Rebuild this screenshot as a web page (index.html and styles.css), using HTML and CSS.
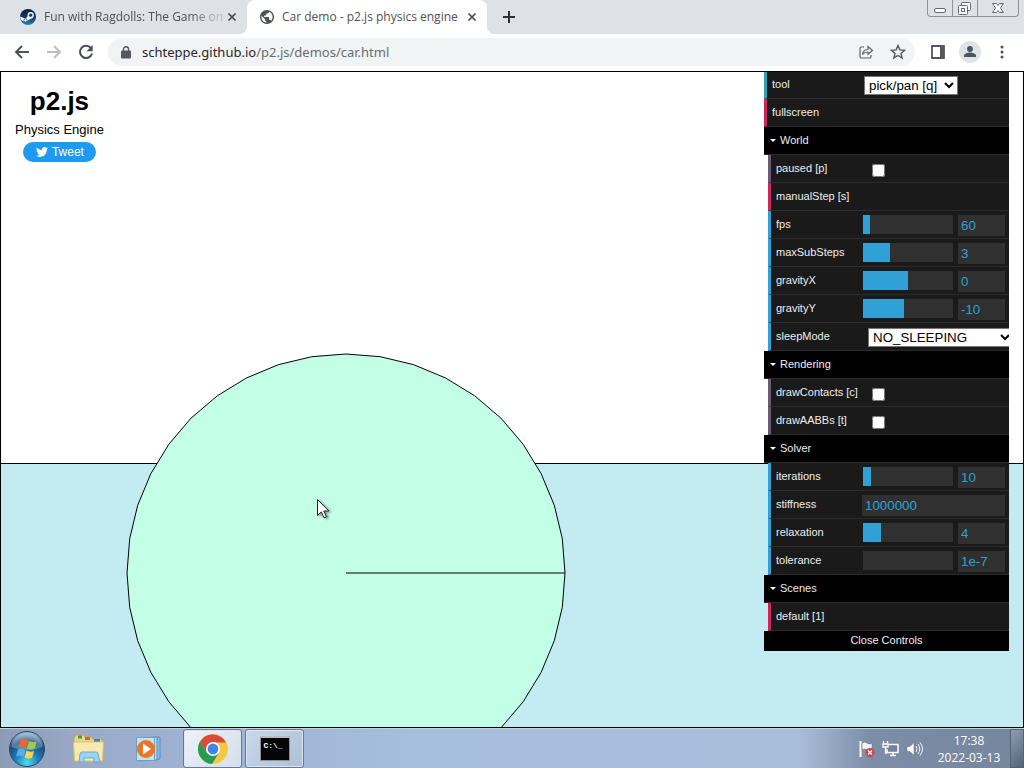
FILE: index.html
```html
<!DOCTYPE html>
<html lang="en">
<head>
<meta charset="utf-8">
<title>Car demo - p2.js physics engine</title>
<link rel="stylesheet" href="styles.css">
</head>
<body>
<header class="tabstrip">
  <div class="tab">
    <svg class="favicon" viewBox="0 0 16 16"><defs><linearGradient id="steam" x2="0" y2="1"><stop offset="0" stop-color="#111d36"/><stop offset=".5" stop-color="#123966"/><stop offset="1" stop-color="#2485bf"/></linearGradient></defs><circle cx="8" cy="8" r="8" fill="url(#steam)"/><path d="M0 7.500 5.600 9.800 8 7 13 8.500 8.200 11.200 5.500 13.200 1 11z" fill="#fff"/><circle cx="10.700" cy="6.200" r="3.100" fill="#fff"/><circle cx="10.700" cy="6.200" r="1.900" fill="#17325a" stroke="#fff" stroke-width=".5"/><circle cx="5.500" cy="11.300" r="1.600" fill="#fff" stroke="#17325a" stroke-width=".7"/></svg>
    <span class="tab-title tab-title-faded">Fun with Ragdolls: The Game on</span>
    <button class="tab-close" aria-label="Close tab"><svg width="10" height="10" viewBox="0 0 10 10"><path d="M1.500 1.500l7 7m0-7l-7 7" stroke="#45484c" stroke-width="1.700"/></svg></button>
  </div>
  <div class="tab tab-active">
    <svg class="favicon favicon-globe" viewBox="2 2 20 20"><path fill="#4f5357" d="M12 2C6.480 2 2 6.480 2 12s4.480 10 10 10 10-4.480 10-10S17.520 2 12 2zm-1 17.930c-3.950-.49-7-3.850-7-7.930 0-.62.080-1.210.21-1.790L9 15v1c0 1.100.9 2 2 2v1.930zm6.900-2.540c-.26-.81-1-1.390-1.900-1.390h-1v-3c0-.55-.45-1-1-1H8v-2h2c.55 0 1-.45 1-1V7h2c1.100 0 2-.9 2-2v-.41c2.930 1.190 5 4.060 5 7.410 0 2.080-.8 3.970-2.100 5.390z"/></svg>
    <span class="tab-title">Car demo - p2.js physics engine</span>
    <button class="tab-close" aria-label="Close tab"><svg width="10" height="10" viewBox="0 0 10 10"><path d="M1.500 1.500l7 7m0-7l-7 7" stroke="#45484c" stroke-width="1.700"/></svg></button>
  </div>
  <button class="new-tab" aria-label="New tab"><svg width="12" height="12" viewBox="0 0 12 12"><path d="M6 0v12M0 6h12" stroke="#2d3033" stroke-width="2"/></svg></button>
  <div class="window-controls">
    <button aria-label="Minimize"><svg width="24" height="16" viewBox="0 0 24 16"><rect x="6.500" y="8.500" width="11" height="4" rx="1.500" fill="#fafbfc" stroke="#666b74"/></svg></button>
    <button aria-label="Restore"><svg width="24" height="16" viewBox="0 0 24 16"><g fill="#fafbfc" stroke="#666b74"><rect x="8.500" y="2.500" width="9" height="8" rx="1"/><rect x="5.500" y="5.500" width="9" height="9" rx="1"/><rect x="8.500" y="8.500" width="3" height="3"/></g></svg></button>
    <button aria-label="Close window"><svg width="40" height="16" viewBox="0 0 40 16"><path d="M14.500 3.500h4l1.500 2 1.500-2h4L22.500 8l3 4.500h-4l-1.500-2-1.500 2h-4l3-4.500z" fill="#fafbfc" stroke="#666b74"/></svg></button>
  </div>
</header>
<nav class="toolbar">
  <button aria-label="Back"><svg width="16" height="16" viewBox="0 0 16 16"><path d="M15 8H2m6-6L2 8l6 6" fill="none" stroke="#4c5054" stroke-width="1.900"/></svg></button>
  <button aria-label="Forward"><svg width="16" height="16" viewBox="0 0 16 16"><path d="M1 8h13M8 2l6 6-6 6" fill="none" stroke="#bdbfc2" stroke-width="1.900"/></svg></button>
  <button aria-label="Reload"><svg width="16" height="16" viewBox="0 0 16 16"><path d="M13 4.200A6.100 6.100 0 1 0 14 9.500" fill="none" stroke="#4c5054" stroke-width="2"/><path d="M14.700 1v6.200H8.500z" fill="#4c5054"/></svg></button>
  <div class="omnibox">
    <svg width="10" height="13" viewBox="0 0 10 13"><rect y="4.500" width="10" height="8" rx="1" fill="#54585d"/><path d="M2.500 5V3.200a2.500 2.500 0 0 1 5 0V5" fill="none" stroke="#54585d" stroke-width="1.400"/></svg>
    <div class="url">schteppe.github.io<span>/p2.js/demos/car.html</span></div>
    <button aria-label="Share"><svg width="16" height="16" viewBox="0 0 16 16"><path d="M6 3H3.500A1.500 1.500 0 0 0 2 4.500v8A1.500 1.500 0 0 0 3.500 14h8a1.500 1.500 0 0 0 1.500-1.500V11M4.500 10.500C5 7 7 5.500 10 5.500V2.500L14.500 6.500 10 10.300V8C7.500 8 6 8.500 4.500 10.500z" fill="none" stroke="#5f6368" stroke-width="1.200"/></svg></button>
    <button aria-label="Bookmark"><svg width="16" height="16" viewBox="0 0 16 16"><path d="M8 1.600l1.900 4.300 4.700.4-3.600 3.100 1.100 4.600L8 11.500 3.900 14 5 9.400 1.400 6.300l4.700-.4z" fill="none" stroke="#54585d" stroke-width="1.400"/></svg></button>
  </div>
  <div class="toolbar-end">
    <button aria-label="Side panel"><svg width="14" height="14" viewBox="0 0 14 14"><path d="M1 1h12v12H1z" fill="#fff" stroke="#54585d" stroke-width="1.800"/><path d="M9 1h4v12H9z" fill="#54585d"/></svg></button>
    <button aria-label="Profile"><svg width="22" height="22" viewBox="0 0 22 22"><circle cx="11" cy="11" r="11" fill="#dfe2e7"/><circle cx="11" cy="8" r="2.900" fill="#4b545f"/><path d="M5 16v-1.500c0-2 4-3 6-3s6 1 6 3V16z" fill="#4b545f"/></svg></button>
    <button class="menu" aria-label="Menu"><svg width="4" height="14" viewBox="0 0 4 14" fill="#4c5054"><circle cx="2" cy="2" r="1.500"/><circle cx="2" cy="7" r="1.500"/><circle cx="2" cy="12" r="1.500"/></svg></button>
  </div>
</nav>

<main class="stage">
  <svg class="world" width="100%" height="100%">
    <rect class="ground" x="-2" y="391.500" width="101%" height="100%"/>
    <g class="wheel" transform="translate(345 501)">
      <polygon points="219,0 216.300,34.300 208.300,67.700 195.100,99.400 177.200,128.700 154.900,154.900 128.700,177.200 99.400,195.100 67.700,208.300 34.300,216.300 0,219 -34.300,216.300 -67.700,208.300 -99.400,195.100 -128.700,177.200 -154.900,154.900 -177.200,128.700 -195.100,99.400 -208.300,67.700 -216.300,34.300 -219,0 -216.300,-34.300 -208.300,-67.700 -195.100,-99.400 -177.200,-128.700 -154.900,-154.900 -128.700,-177.200 -99.400,-195.100 -67.700,-208.300 -34.300,-216.300 0,-219 34.300,-216.300 67.700,-208.300 99.400,-195.100 128.700,-177.200 154.900,-154.900 177.200,-128.700 195.100,-99.400 208.300,-67.700 216.300,-34.300"/>
      <line x1="0" y1="0" x2="219" y2="0"/>
    </g>
  </svg>
  <section class="brand">
    <h1>p2.js</h1>
    <p>Physics Engine</p>
    <a class="tweet" href="#tweet"><svg width="12" height="12" viewBox="0 0 24 24"><path fill="#fff" d="M23.950 4.570a10 10 0 0 1-2.820.77 4.960 4.960 0 0 0 2.160-2.720c-.95.55-2 .95-3.130 1.180a4.920 4.920 0 0 0-8.380 4.480C7.690 8.100 4.070 6.130 1.640 3.160a4.820 4.820 0 0 0-.67 2.480c0 1.710.87 3.210 2.190 4.100a4.900 4.900 0 0 1-2.230-.62v.06a4.920 4.920 0 0 0 3.950 4.830 5 5 0 0 1-2.210.08 4.940 4.940 0 0 0 4.600 3.420A9.870 9.870 0 0 1 0 19.540a13.990 13.990 0 0 0 7.550 2.210c9.050 0 14-7.500 14-13.980 0-.21 0-.42-.02-.63a9.940 9.940 0 0 0 2.420-2.570z"/></svg>Tweet</a>
  </section>

  <aside class="gui">
    <div class="row select"><label for="tool">tool</label><div class="control"><select id="tool" class="tool"><option>pick/pan [q]</option></select></div></div>
    <button class="row function">fullscreen</button>
    <button class="folder">World</button>
    <div class="group">
      <div class="row boolean"><label for="paused">paused [p]</label><div class="control"><input type="checkbox" id="paused"></div></div>
      <button class="row function">manualStep [s]</button>
      <div class="row number"><label for="fps">fps</label><div class="control"><div class="slider"><i style="width:8%"></i></div><input type="text" id="fps" value="60"></div></div>
      <div class="row number"><label for="sub">maxSubSteps</label><div class="control"><div class="slider"><i style="width:30%"></i></div><input type="text" id="sub" value="3"></div></div>
      <div class="row number"><label for="gx">gravityX</label><div class="control"><div class="slider"><i style="width:50%"></i></div><input type="text" id="gx" value="0"></div></div>
      <div class="row number"><label for="gy">gravityY</label><div class="control"><div class="slider"><i style="width:45%"></i></div><input type="text" id="gy" value="-10"></div></div>
      <div class="row number"><label for="sleep">sleepMode</label><div class="control"><select id="sleep" class="sleep"><option>NO_SLEEPING</option><option>BODY_SLEEPING</option><option>ISLAND_SLEEPING</option></select></div></div>
    </div>
    <button class="folder">Rendering</button>
    <div class="group">
      <div class="row boolean"><label for="contacts">drawContacts [c]</label><div class="control"><input type="checkbox" id="contacts"></div></div>
      <div class="row boolean"><label for="aabbs">drawAABBs [t]</label><div class="control"><input type="checkbox" id="aabbs"></div></div>
    </div>
    <button class="folder">Solver</button>
    <div class="group">
      <div class="row number"><label for="iter">iterations</label><div class="control"><div class="slider"><i style="width:9%"></i></div><input type="text" id="iter" value="10"></div></div>
      <div class="row number"><label for="stiff">stiffness</label><div class="control"><input type="text" id="stiff" class="full" value="1000000"></div></div>
      <div class="row number"><label for="relax">relaxation</label><div class="control"><div class="slider"><i style="width:20%"></i></div><input type="text" id="relax" value="4"></div></div>
      <div class="row number"><label for="tol">tolerance</label><div class="control"><div class="slider"><i style="width:0%"></i></div><input type="text" id="tol" value="1e-7"></div></div>
    </div>
    <button class="folder">Scenes</button>
    <div class="group">
      <button class="row function">default [1]</button>
    </div>
    <button class="close-controls">Close Controls</button>
  </aside>

  <svg class="cursor" width="16" height="22" viewBox="0 0 16 22"><path d="M.5.500v16l3.800-3.600 2.700 6 2.500-1.100-2.700-5.800h5z" fill="#fff" stroke="#222"/></svg>
</main>

<footer class="taskbar">
  <button class="start" aria-label="Start"><svg width="38" height="38" viewBox="0 0 38 38"><defs><radialGradient id="orb" cx=".5" cy=".9" r=".85"><stop offset="0" stop-color="#4fe0f4"/><stop offset=".4" stop-color="#1b7fb9"/><stop offset=".75" stop-color="#194b7c"/><stop offset="1" stop-color="#8fb0cc"/></radialGradient></defs><circle cx="19" cy="19" r="17.500" fill="url(#orb)" stroke="#284868"/><path d="M3.500 17A15.600 15.600 0 0 1 34.500 17Q19 23 3.500 17z" fill="#fff" opacity=".25"/><path d="M12.500 10q4-2 7.500.5l-2 7.500q-3.500-2-7.500-.5z" fill="#f0652c"/><path d="M21 11q3.500 2 7.500.5l-2 7.500q-4 1.500-7.500-.5z" fill="#9ccc4b"/><path d="M10 19.500q4-2 7.500.5l-2 7q-3.500-2-7.500-.5z" fill="#59aee6"/><path d="M18.500 20.500q3.500 2 7.500.5l-2 7q-4 1.500-7.500-.5z" fill="#fed154"/></svg></button>
  <button class="pin" aria-label="File Explorer"><svg width="34" height="30" viewBox="0 0 34 30"><path d="M2 4l2-3h7l2 2h7v2h9l2 3v19H2z" fill="#ecd786" stroke="#c6aa58"/><path d="M6 1.500h4v3H6z" fill="#3e9b54"/><path d="M13 3h5v3h-5z" fill="#d3603c"/><path d="M22 5h6v3h-6z" fill="#3c82c6"/><path d="M1.500 8h30l-1 19h-28z" fill="#f8eaae" stroke="#d9c270"/><path d="M7 28l1-8q0-2 2-2h14q2 0 2 2l2 8h-6v-4H12v4z" fill="#9cd3f1" stroke="#68a9d4"/></svg></button>
  <button class="pin" aria-label="Media Player"><svg width="28" height="28" viewBox="0 0 28 28"><path d="M7 3l18-1v22l-18 1z" fill="#8abce0" stroke="#5a8fbc"/><path d="M4 3l18-1v23l-18 1z" fill="#b9daf0" stroke="#5a8fbc"/><path d="M1.500 2.500h18v23h-18z" fill="#c4e1f3" stroke="#6c9fc6"/><circle cx="11" cy="14" r="9" fill="#ed7422"/><path d="M8 8.500l8 5.500-8 5.500z" fill="#fff"/></svg></button>
  <button class="task task-active" aria-label="Google Chrome"><svg width="30" height="30" viewBox="0 0 30 30"><circle cx="15" cy="15" r="15" fill="#f7c83d"/><path d="M2 7.500A15 15 0 0 1 28 8.500H15L8.500 18.700z" fill="#d84b3d"/><path d="M2 7.500A15 15 0 0 0 14 30L21 18.700 15 21.500 8.500 18.700z" fill="#259b56"/><circle cx="15" cy="15" r="7" fill="#fff"/><circle cx="15" cy="15" r="5.400" fill="#4285e5"/></svg></button>
  <button class="task" aria-label="Command Prompt"><span class="console">C:\_</span></button>
  <div class="tray">
    <svg width="18" height="18" viewBox="0 0 18 18"><path d="M2.500 1v16" stroke="#fff" stroke-width="2"/><path d="M4 3q3-2 5 0t5 0v7q-3 2-5 0t-5 0z" fill="#f2f4f6" stroke="#626d80" stroke-width=".6"/><circle cx="12" cy="12.500" r="4.500" fill="#d04045"/><path d="M10 10.500l4 4m0-4l-4 4" stroke="#fff" stroke-width="1.500"/></svg>
    <svg width="18" height="18" viewBox="0 0 18 18"><path d="M6 4.500h10v8H5V9M8 15.500h6M11 12v3" fill="#718197" stroke="#fff" stroke-width="1.500"/><path d="M1.500 1v2m4-2v2M1 4h5v3H1zM3.500 7v6H5" fill="none" stroke="#fff" stroke-width="1.300"/></svg>
    <svg width="18" height="18" viewBox="0 0 18 18"><path d="M1 6.500h3l4-4v13l-4-4H1z" fill="#fff" stroke="#5d697c" stroke-width=".5"/><path d="M10 6q2 3 0 6M12 4q3.500 5 0 10M14 2.500q5 6.500 0 13" fill="none" stroke="#f1f4f8"/></svg>
    <div class="clock"><time>17:38</time><time>2022-03-13</time></div>
    <button class="show-desktop" aria-label="Show desktop"></button>
  </div>
</footer>
</body>
</html>
```
FILE: styles.css
```css
* { box-sizing: border-box; }
html, body { height: 100%; }
body {
  margin: 0;
  display: flex;
  flex-direction: column;
  overflow: hidden;
  font-family: "Liberation Sans", Arial, sans-serif;
}
button { margin: 0; padding: 0; border: 0; background: none; color: inherit; font: inherit; }
svg { display: block; flex: none; }

.tabstrip {
  flex: none;
  display: flex;
  height: 34px;
  padding-left: 7px;
  background: #dee1e6;
  font: 12px/16px "Open Sans", "Noto Sans", sans-serif;
  color: #4d5156;
}
.tab {
  position: relative;
  display: flex;
  align-items: center;
  width: 240px;
  padding: 0 10px 0 13px;
}
.tab-active { background: #fff; border-radius: 8px 8px 0 0; }
.tab-active::before, .tab-active::after {
  content: "";
  position: absolute;
  bottom: 0;
  width: 8px;
  height: 8px;
}
.tab-active::before { left: -8px; background: radial-gradient(circle at 0 0, #dee1e6 8px, #fff 8px); }
.tab-active::after { right: -8px; background: radial-gradient(circle at 100% 0, #dee1e6 8px, #fff 8px); }
.favicon { width: 16px; height: 16px; }
.favicon-globe { width: 14px; height: 14px; }
.tab-title { flex: 1; min-width: 0; margin: 0 2px 0 8px; white-space: nowrap; }
.tab-title-faded { -webkit-mask-image: linear-gradient(90deg, #000 80%, #0004 95%); mask-image: linear-gradient(90deg, #000 80%, #0004 95%); }
.new-tab { padding: 0 16px; }
.window-controls {
  display: flex;
  height: 17px;
  margin: 0 5px 0 auto;
  border: 1px solid #8d929b;
  border-top: 0;
  border-radius: 0 0 4px 4px;
}
.window-controls button + button { border-left: 1px solid #8d929b; }

.toolbar {
  flex: none;
  display: flex;
  align-items: center;
  gap: 16px;
  height: 37px;
  padding: 0 20px 1px 14px;
  background: #fff;
}
.toolbar-end { display: flex; align-items: center; gap: 14px; }
.menu { margin-left: 5px; }
.omnibox {
  flex: 1;
  display: flex;
  align-items: center;
  gap: 16px;
  height: 28px;
  margin-left: -2px;
  padding: 0 9px 0 13px;
  border-radius: 14px;
  background: #f1f3f4;
}
.url { flex: 1; margin-left: -5px; font: 13px/20px "Noto Sans", sans-serif; color: #25282c; }
.url span { color: #686c71; }

.stage {
  position: relative;
  flex: 1;
  min-height: 0;
  border: 1px solid #000;
  background: #fff;
  overflow: hidden;
}
.world { position: absolute; inset: 0; }
.ground { fill: #c2ebf2; stroke: #000; }
.wheel { fill: #c3fee7; stroke: #000; }
.brand {
  position: absolute;
  left: 14px;
  top: 14px;
  display: flex;
  flex-direction: column;
  align-items: center;
}
.brand h1 { margin: 0; font-size: 26px; line-height: 30px; }
.brand p { margin: 6px 0 4px; font-size: 13px; line-height: 16px; }
.tweet {
  display: flex;
  align-items: center;
  gap: 4px;
  height: 20px;
  padding: 0 12px 0 13px;
  border-radius: 10px;
  background: #1d9bf0;
  color: #fff;
  font-size: 12px;
  text-decoration: none;
}

.gui {
  position: absolute;
  top: -1px;
  right: 14px;
  width: 245px;
  overflow: hidden;
  color: #eee;
  font-size: 11px;
}
.row {
  display: flex;
  width: 100%;
  height: 28px;
  padding: 0 4px 0 5px;
  border-bottom: 1px solid #2c2c2c;
  border-left: 3px solid #2fa1d6;
  background: #1a1a1a;
  line-height: 27px;
  text-align: left;
}
.row label { flex: none; width: 86px; white-space: nowrap; }
.group { margin-left: 4px; }
.select { border-left-color: #2f9fb5; }
.function { border-left-color: #d0245c; }
.boolean { border-left-color: #6c5b70; }
.folder {
  display: flex;
  align-items: center;
  gap: 4px;
  width: 100%;
  height: 28px;
  padding: 0 0 1px 6px;
  border-bottom: 1px solid #2c2c2c;
  background: #000;
}
.folder::before { content: ""; border: 3px solid transparent; border-top-color: #fff; border-bottom: 0; }
.control { flex: 1; min-width: 0; display: flex; align-items: flex-start; justify-content: space-between; }
.slider { width: 90px; height: 19px; margin: 4px 0 0 1px; background: #303030; }
.slider i { display: block; height: 100%; background: #2fa1d6; }
.control input[type="text"] {
  width: 47px;
  height: 21px;
  margin: 4px 0 0;
  padding: 0 3px;
  border: 0;
  background: #303030;
  color: #2fa1d6;
  font-family: inherit;
}
.control input.full { width: 100%; }
.control input[type="checkbox"] { margin: 9px auto 0 10px; }
.control select {
  height: 19px;
  margin: 5px auto 0 6px;
  padding: 0;
  border: 1px solid #777;
  border-radius: 0;
  background-color: #fff;
  color: #000;
  font-family: inherit;
}
.control .tool { width: 94px; }
.control .sleep { flex: none; width: 146px; }
.close-controls { display: block; width: 100%; height: 20px; padding-bottom: 2px; background: #000; text-align: center; }

.cursor { position: absolute; left: 316px; top: 427px; filter: drop-shadow(2px 1px 1px #0006); }

.taskbar {
  flex: none;
  display: flex;
  align-items: center;
  height: 40px;
  border-top: 1px solid #c4cfdf;
  background: linear-gradient(90deg, #8c9bb6 0, #9aaac8 8%, #9eb2d3 18%, #a7bddc 40%, #a9bedb 78%, #7d8da7 85%, #74859d 100%);
}
.start { margin: 0 13px 0 8px; }
.pin { display: flex; justify-content: center; width: 60px; }
.task {
  display: flex;
  align-items: center;
  justify-content: center;
  width: 59px;
  height: 39px;
  margin-left: 3px;
  border: 1px solid #627896;
  border-radius: 3px;
  background: linear-gradient(135deg, #cbd8e9, #aebfd7);
  box-shadow: inset 0 0 0 1px #dce5f0;
}
.pin + .task { margin-left: 4px; }
.task-active { background: linear-gradient(135deg, #eef2f7, #d5deeb); }
.console {
  width: 30px;
  height: 25px;
  padding: 3px;
  border: 1px solid #8f9296;
  border-top: 2px solid #b9bdc2;
  background: #050505;
  color: #fff;
  font: bold 8px/9px "Liberation Mono", monospace;
  text-align: left;
}
.tray { display: flex; align-items: center; gap: 6px; height: 100%; margin-left: auto; }
.clock {
  display: flex;
  flex-direction: column;
  width: 70px;
  margin-left: 4px;
  color: #fff;
  font: 12px/17px "Open Sans", "Noto Sans", sans-serif;
  text-align: center;
  white-space: nowrap;
}
.show-desktop { width: 14px; height: 100%; border: 1px solid #526277; background: linear-gradient(135deg, #8e9db2, #536276); }
```
